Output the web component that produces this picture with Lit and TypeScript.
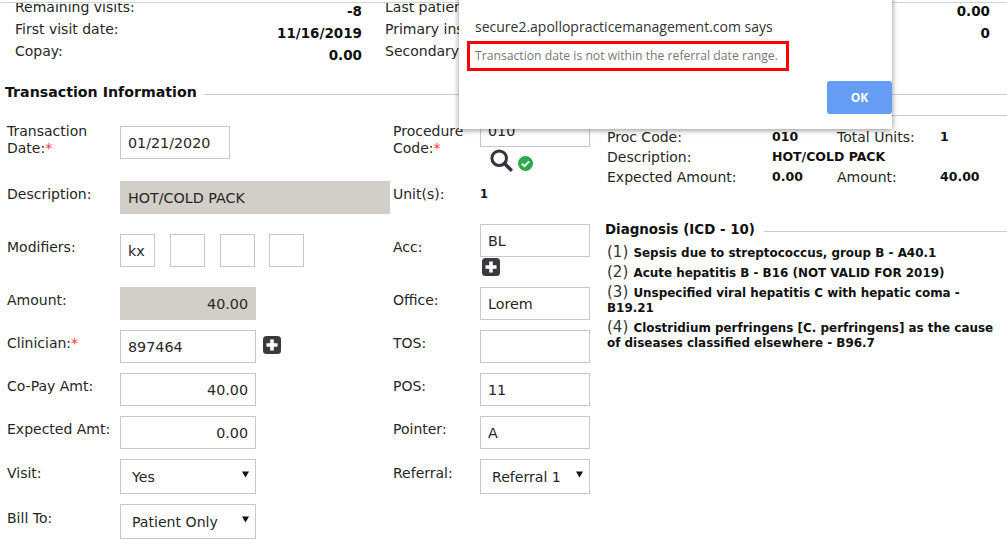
import { LitElement, html, css } from "lit";
import { customElement } from "lit/decorators.js";

const plus = (cls: string) => html`<svg class=${cls} width="18" height="18" viewBox="0 0 18 18"><rect x="0" y="0" width="18" height="18" rx="3.5" fill="#3a3a3e"/><path d="M7.2 3.5h3.6v3.7h3.7v3.6h-3.7v3.7H7.2v-3.7H3.5V7.2h3.7z" fill="#fff"/></svg>`;
const arrow = html`<svg class="arrow" width="7" height="7" viewBox="0 0 7 7"><path d="M0 0.5h7L3.5 6.5z" fill="#111"/></svg>`;

@customElement("app-root")
export class AppRoot extends LitElement {
  static styles = css`
    :host { display: block; position: relative; width: 1007px; height: 549px; overflow: hidden; background: #fff; font-family: "DejaVu Sans", Verdana, sans-serif; font-size: 14px; color: #262626; }
    .viewport { margin-top: 2px; border-top: 1px solid #d4d4d4; height: 546px; overflow: hidden; }
    .content { margin-top: -7px; }
    .info { display: grid; grid-template-columns: 185px 162px 23px 1fr; grid-auto-rows: 22px; padding: 0 17px 0 15px; line-height: 22px; }
    .info b { text-align: right; position: relative; top: 4px; color: #111; font-size: 13.5px; }
    .info .c3 { white-space: nowrap; }
    .section { display: flex; align-items: center; gap: 7px; margin: 21px 0 0 5px; height: 18px; font-weight: bold; font-size: 14.2px; color: #111; white-space: nowrap; line-height: 18px; }
    .section::after { content: ""; flex: 1; height: 1px; background: #ccc; margin-top: 4px; }
    .main { display: flex; margin-top: 13px; }
    .form { display: grid; flex: none; padding-left: 7px; grid-template-columns: 113px 273px 87px 110px; grid-template-rows: 67px 53px 53px 43px 43px 43px 43px 45px 45px; }
    .lab { padding-top: 5px; line-height: 17px; }
    .lab.two { padding-top: 9px; }
    .lab.forsel { padding-top: 6px; }
    .lab i { color: #f33; font-style: normal; }
    .field { box-sizing: border-box; height: 33px; border: 1px solid #c9c9c9; background: #fff; padding: 0 7px; line-height: 33px; white-space: nowrap; font-size: 14.3px; }
    .w110 { width: 110px; }
    .w136 { width: 136px; }
    .right { text-align: right; }
    .ro { background: #d2cec8; border-color: #d2cec8; }
    .desc { width: 270px; }
    .date { margin-top: 12px; }
    .mods { display: flex; }
    .mod { width: 35px; padding: 0 7px; margin-right: 15px; }
    .mod.last { margin-right: 0; margin-left: -1px; }
    .with { display: flex; align-items: flex-start; gap: 7px; }
    .with span { padding-top: 6px; }
    .sel { box-sizing: border-box; height: 35px; border: 1px solid #c9c9c9; line-height: 35px; padding: 1px 6px 0 11px; display: flex; justify-content: space-between; align-items: center; font-size: 14.1px; position: relative; }
    .arrow { position: relative; top: -3px; flex: none; }
    .unit { padding-top: 5px; line-height: 17px; font-weight: bold; font-size: 11.5px; color: #111; }
    .under { display: flex; align-items: center; padding: 2px 0 0 10px; gap: 5px; }
    .check { margin-top: 6px; }
    .acc { margin-top: -10px; }
    .plus-under { display: block; margin: 1px 0 0 2px; }
    .summary-wrap { margin-left: 17px; flex: 1; min-width: 0; }
    .rule { height: 1px; background: #ccc; margin-top: 1px; }
    .summary { display: grid; grid-template-columns: 165px 65px 103px 1fr; grid-auto-rows: 20px; line-height: 20px; margin-top: 11px; white-space: nowrap; }
    .summary b { color: #111; font-size: 12.5px; }
    .span3 { grid-column: span 3; }
    .dx-title { display: flex; align-items: center; gap: 9px; margin: 34px 0 0 -2px; height: 18px; line-height: 18px; font-weight: bold; font-size: 13.4px; color: #111; white-space: nowrap; }
    .dx-title::after { content: ""; flex: 1; height: 1px; background: #ccc; margin-top: 3px; }
    .dx { list-style: none; margin: 7px 0 0; padding: 0; width: 392px; }
    .dx li { line-height: 15px; margin-bottom: 5px; font-weight: bold; font-size: 11.95px; color: #111; }
    .dx li span { font-weight: normal; font-size: 15px; line-height: 0; color: #333; margin-right: 1px; }
    .dialog { position: absolute; left: 459px; top: -10px; width: 433px; height: 139px; box-sizing: border-box; background: #fff; box-shadow: 0 1px 6px rgba(0,0,0,.45); padding: 27px 0 0 16px; font-family: "Open Sans", "Noto Sans", sans-serif; }
    .says { font-size: 14px; line-height: 20px; color: #333; white-space: nowrap; }
    .msgbox { box-sizing: border-box; width: 322px; height: 30px; margin: 4px 0 0 -8px; border: 3px solid #f00; padding-left: 5px; line-height: 24px; font-size: 12.2px; color: #777; white-space: nowrap; }
    .actions { display: flex; justify-content: flex-end; margin: 10px 0 0; }
    .ok { box-sizing: border-box; width: 65px; height: 33px; line-height: 33px; text-align: center; background: #659df6; border-radius: 3px; color: #fff; font-weight: 700; font-size: 12px; }
    .val { float: right; }
  `;

  render() {
    return html`
      <div class="viewport"><div class="content">
        <div class="info">
          <span>Remaining visits:</span><b>-8</b><span></span><span class="c3">Last patient visit:<b class="val">0.00</b></span>
          <span>First visit date:</span><b>11/16/2019</b><span></span><span class="c3">Primary insurance:<b class="val">0</b></span>
          <span>Copay:</span><b>0.00</b><span></span><span class="c3">Secondary insurance:</span>
        </div>
        <div class="section">Transaction Information</div>
        <div class="main">
          <div class="form">
            <div class="lab two">Transaction<br />Date:<i>*</i></div>
            <div><div class="field date w110">01/21/2020</div></div>
            <div class="lab two">Procedure<br />Code:<i>*</i></div>
            <div>
              <div class="field">010</div>
              <div class="under">
                <svg width="23" height="23" viewBox="0 0 23 23"><circle cx="9.2" cy="9.2" r="7.3" fill="none" stroke="#33363a" stroke-width="3"/><path d="M14.6 14.6l6.2 6.2" stroke="#33363a" stroke-width="3.6" stroke-linecap="round"/></svg>
                <svg class="check" width="15" height="15" viewBox="0 0 15 15"><circle cx="7.5" cy="7.5" r="7.5" fill="#2fa84a"/><path d="M3.8 7.6l2.6 2.6 4.8-4.8" fill="none" stroke="#fff" stroke-width="2"/></svg>
              </div>
            </div>

            <div class="lab">Description:</div>
            <div><div class="field ro desc">HOT/COLD PACK</div></div>
            <div class="lab">Unit(s):</div>
            <div class="unit">1</div>

            <div class="lab">Modifiers:</div>
            <div class="mods"><div class="field mod">kx</div><div class="field mod"></div><div class="field mod"></div><div class="field mod last"></div></div>
            <div class="lab">Acc:</div>
            <div class="acc"><div class="field">BL</div>${plus("plus-under")}</div>

            <div class="lab">Amount:</div>
            <div><div class="field ro w136 right">40.00</div></div>
            <div class="lab">Office:</div>
            <div><div class="field">Lorem</div></div>

            <div class="lab">Clinician:<i>*</i></div>
            <div class="with"><div class="field w136">897464</div><span>${plus("")}</span></div>
            <div class="lab">TOS:</div>
            <div><div class="field"></div></div>

            <div class="lab">Co-Pay Amt:</div>
            <div><div class="field w136 right">40.00</div></div>
            <div class="lab">POS:</div>
            <div><div class="field">11</div></div>

            <div class="lab">Expected Amt:</div>
            <div><div class="field w136 right">0.00</div></div>
            <div class="lab">Pointer:</div>
            <div><div class="field">A</div></div>

            <div class="lab forsel">Visit:</div>
            <div><div class="sel w136"><span>Yes</span>${arrow}</div></div>
            <div class="lab forsel">Referral:</div>
            <div><div class="sel"><span>Referral 1</span>${arrow}</div></div>

            <div class="lab forsel">Bill To:</div>
            <div><div class="sel w136"><span>Patient Only</span>${arrow}</div></div>
          </div>
          <div class="summary-wrap">
            <div class="rule"></div>
            <div class="summary">
              <span>Proc Code:</span><b>010</b><span>Total Units:</span><b>1</b>
              <span>Description:</span><b class="span3">HOT/COLD PACK</b>
              <span>Expected Amount:</span><b>0.00</b><span>Amount:</span><b>40.00</b>
            </div>
            <div class="dx-title">Diagnosis (ICD - 10)</div>
            <ul class="dx">
              <li><span>(1)</span> Sepsis due to streptococcus, group B - A40.1</li>
              <li><span>(2)</span> Acute hepatitis B - B16 (NOT VALID FOR 2019)</li>
              <li><span>(3)</span> Unspecified viral hepatitis C with hepatic coma - B19.21</li>
              <li><span>(4)</span> Clostridium perfringens [C. perfringens] as the cause of diseases classified elsewhere - B96.7</li>
            </ul>
          </div>
        </div>
      </div></div>
      <div class="dialog" role="alertdialog">
        <div class="says">secure2.apollopracticemanagement.com says</div>
        <div class="msgbox">Transaction date is not within the referral date range.</div>
        <div class="actions"><div class="ok">OK</div></div>
      </div>
    `;
  }
}
